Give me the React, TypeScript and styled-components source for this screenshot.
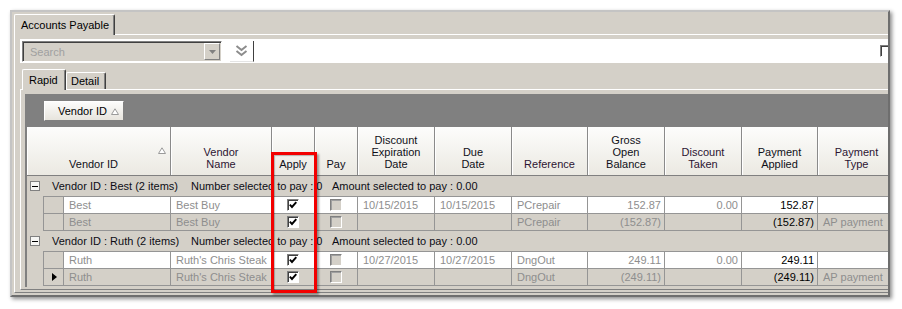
import React from 'react';
import styled, { createGlobalStyle } from 'styled-components';

const GlobalStyle = createGlobalStyle`
  html, body {
    margin: 0;
    padding: 0;
    background: #fff;
  }
  body {
    font-family: "Liberation Sans", Arial, sans-serif;
    font-size: 11px;
    color: #000;
  }
`;

const Page = styled.div`
  position: relative;
  width: 902px;
  height: 309px;
  padding: 10px 0 0 10px;
  box-sizing: border-box;
`;

const Window = styled.div`
  width: 880px;
  height: 287px;
  box-sizing: border-box;
  background: #d4d0c8;
  border: 2px solid;
  border-color: #c4c4c4 #6e6e6e #6e6e6e #c4c4c4;
  box-shadow: 2px 2px 4px rgba(0, 0, 0, 0.45);
  padding: 2px 0 2px 2px;
  display: flex;
  flex-direction: column;
  overflow: hidden;
`;

const TabStrip = styled.div<{ $indent?: number }>`
  display: flex;
  align-items: flex-end;
  height: 20px;
  padding-left: ${p => p.$indent ?? 0}px;
  flex-shrink: 0;
`;

const Tab = styled.div<{ $active?: boolean; $width: number }>`
  position: relative;
  z-index: 1;
  box-sizing: border-box;
  width: ${p => p.$width}px;
  height: ${p => (p.$active ? 21 : 17)}px;
  margin-bottom: ${p => (p.$active ? -1 : 0)}px;
  padding: ${p => (p.$active ? '0 0 1px 6px' : '0 0 0 4px')};
  background: #d4d0c8;
  border-top: 1px solid #fff;
  border-left: 1px solid #fff;
  border-right: 1px solid #404040;
  border-radius: 2px 2px 0 0;
  box-shadow: inset -1px 0 #808080;
  display: flex;
  align-items: center;
  white-space: nowrap;
`;

const Panel = styled.div<{ $pad: string }>`
  flex: 1;
  min-height: 0;
  display: flex;
  flex-direction: column;
  border-top: 1px solid #fff;
  border-left: 1px solid #fff;
  border-bottom: 1px solid #808080;
  padding: ${p => p.$pad};
`;

const SearchStrip = styled.div`
  height: 24px;
  flex-shrink: 0;
  background: #fff;
  display: flex;
  align-items: center;
  padding-left: 2px;
  margin-bottom: 6px;
  gap: 8px;
`;

const SearchBox = styled.div`
  box-sizing: border-box;
  width: 200px;
  height: 21px;
  background: #d4d0c8;
  border: 1px solid;
  border-color: #808080 #fff #fff #808080;
  box-shadow: inset 1px 1px #404040;
  display: flex;
  align-items: center;
  padding: 1px 1px 0 7px;
  color: #a0a0a0;
`;

const DropButton = styled.div`
  margin-left: auto;
  box-sizing: border-box;
  width: 16px;
  height: 17px;
  background: #d4d0c8;
  border: 1px solid;
  border-color: #fff #808080 #808080 #fff;
  display: flex;
  align-items: center;
  justify-content: center;
`;

const ChevronButton = styled.div`
  box-sizing: border-box;
  width: 24px;
  height: 21px;
  background: #fff;
  border-right: 1px solid #404040;
  border-bottom: 1px solid #e4e4e4;
  display: flex;
  align-items: center;
  justify-content: center;
`;

const CornerCheck = styled.div`
  margin-left: auto;
  margin-right: -4px;
  box-sizing: border-box;
  width: 12px;
  height: 12px;
  background: #fff;
  border: 1px solid;
  border-color: #808080 #fff #fff #808080;
  box-shadow: inset 1px 1px #404040;
`;

const Grid = styled.div`
  flex: 1;
  display: flex;
  flex-direction: column;
  background: #d4d0c8;
  border-left: 2px solid #808080;
`;

const GroupByArea = styled.div`
  height: 33px;
  flex-shrink: 0;
  box-sizing: border-box;
  background: #808080;
  padding: 7px 0 0 17px;
`;

const GroupByButton = styled.div`
  box-sizing: border-box;
  width: 80px;
  height: 20px;
  background: linear-gradient(#fcfcfb, #e7e4dd);
  border: 1px solid;
  border-color: #fff #808080 #808080 #fff;
  display: flex;
  align-items: center;
  gap: 4px;
  padding-left: 13px;
`;

const HeaderRow = styled.div`
  display: flex;
  height: 49px;
  box-sizing: border-box;
  border-bottom: 1px solid #808080;
  flex-shrink: 0;
`;

const HeaderCell = styled.div<{ $w: number; $purple?: boolean; $sortable?: boolean }>`
  position: relative;
  flex-shrink: 0;
  box-sizing: border-box;
  width: ${p => p.$w}px;
  background: linear-gradient(#fdfdfc, #ebe9e2);
  border-right: 1px solid #8a8a8a;
  box-shadow: inset 1px 0 #fff;
  display: flex;
  flex-direction: column;
  justify-content: flex-end;
  align-items: center;
  text-align: center;
  line-height: 12px;
  padding: 0 ${p => (p.$sortable ? 10 : 0)}px 5px 0;
  color: ${p => (p.$purple ? '#2c1432' : '#101018')};
`;

const SortMark = styled.div`
  position: absolute;
  top: 20px;
  right: 4px;
  line-height: 0;
`;

const GroupRow = styled.div`
  height: 20px;
  flex-shrink: 0;
  display: flex;
  align-items: center;
  padding-left: 3px;
  white-space: nowrap;
`;

const Expander = styled.div`
  box-sizing: border-box;
  width: 10px;
  height: 10px;
  margin-right: 12px;
  background: #f6f6f4;
  border: 1px solid #808080;
  display: flex;
  align-items: center;
  justify-content: center;
  &::after {
    content: '';
    width: 6px;
    height: 1px;
    background: #000;
  }
`;

const GroupLabel = styled.span<{ $w?: number }>`
  display: inline-block;
  width: ${p => (p.$w ? `${p.$w}px` : 'auto')};
  color: #0c0c14;
`;

const DataBlock = styled.div`
  margin-left: 16px;
  border-top: 1px solid #959595;
  border-left: 1px solid #959595;
  flex-shrink: 0;
`;

const DataRow = styled.div<{ $light: boolean }>`
  display: flex;
  height: 17px;
  box-sizing: border-box;
  border-bottom: 1px solid #959595;
  background: ${p => (p.$light ? '#fff' : '#d4d0c8')};
`;

const Selector = styled.div`
  flex-shrink: 0;
  box-sizing: border-box;
  width: 20px;
  background: #d4d0c8;
  border-right: 1px solid #959595;
  display: flex;
  align-items: center;
  justify-content: center;
`;

const Pointer = styled.div`
  width: 0;
  height: 0;
  margin-left: 2px;
  border-top: 4px solid transparent;
  border-bottom: 4px solid transparent;
  border-left: 5px solid #000;
`;

const Cell = styled.div<{ $w: number; $align?: 'left' | 'right' | 'center'; $strong?: boolean }>`
  flex-shrink: 0;
  box-sizing: border-box;
  width: ${p => p.$w}px;
  border-right: 1px solid #959595;
  display: flex;
  align-items: center;
  justify-content: ${p =>
    p.$align === 'right' ? 'flex-end' : p.$align === 'center' ? 'center' : 'flex-start'};
  padding: ${p => (p.$align === 'right' ? '0 3px 0 0' : p.$align === 'center' ? '0' : '0 0 0 5px')};
  white-space: nowrap;
  overflow: hidden;
  color: ${p => (p.$strong ? '#000' : '#8e8e8e')};
`;

const CheckBox = styled.div<{ $enabled?: boolean }>`
  box-sizing: border-box;
  width: 12px;
  height: 12px;
  background: ${p => (p.$enabled ? '#fff' : '#d4d0c8')};
  border: 1px solid;
  border-color: #808080 #fff #fff #808080;
  box-shadow: inset 1px 1px ${p => (p.$enabled ? '#404040' : '#a0a0a0')};
  display: flex;
  align-items: center;
  justify-content: center;
  line-height: 0;
`;

const Annotation = styled.div`
  position: absolute;
  left: 271px;
  top: 152px;
  width: 46px;
  height: 141px;
  box-sizing: border-box;
  border: 3px solid #f20000;
  box-shadow: 2px 2px 2px rgba(0, 0, 0, 0.35), inset 1px 1px 1px rgba(0, 0, 0, 0.25);
  pointer-events: none;
`;

interface Column {
  title: string[];
  w: number;
  purple?: boolean;
  sortable?: boolean;
}

const columns: Column[] = [
  { title: ['Vendor ID'], w: 144, sortable: true },
  { title: ['Vendor', 'Name'], w: 101, purple: true },
  { title: ['Apply'], w: 43 },
  { title: ['Pay'], w: 43 },
  { title: ['Discount', 'Expiration', 'Date'], w: 77 },
  { title: ['Due', 'Date'], w: 77 },
  { title: ['Reference'], w: 76, purple: true },
  { title: ['Gross', 'Open', 'Balance'], w: 77 },
  { title: ['Discount', 'Taken'], w: 77, purple: true },
  { title: ['Payment', 'Applied'], w: 76 },
  { title: ['Payment', 'Type'], w: 78, purple: true },
];

interface Payable {
  vendor: string;
  name: string;
  discDate: string;
  dueDate: string;
  reference: string;
  gross: string;
  taken: string;
  applied: string;
  type: string;
  light: boolean;
  current?: boolean;
}

interface Group {
  vendor: string;
  rows: Payable[];
}

const groups: Group[] = [
  {
    vendor: 'Best',
    rows: [
      { vendor: 'Best', name: 'Best Buy', discDate: '10/15/2015', dueDate: '10/15/2015', reference: 'PCrepair', gross: '152.87', taken: '0.00', applied: '152.87', type: '', light: true },
      { vendor: 'Best', name: 'Best Buy', discDate: '', dueDate: '', reference: 'PCrepair', gross: '(152.87)', taken: '', applied: '(152.87)', type: 'AP payment', light: false },
    ],
  },
  {
    vendor: 'Ruth',
    rows: [
      { vendor: 'Ruth', name: "Ruth's Chris Steak", discDate: '10/27/2015', dueDate: '10/27/2015', reference: 'DngOut', gross: '249.11', taken: '0.00', applied: '249.11', type: '', light: true },
      { vendor: 'Ruth', name: "Ruth's Chris Steak", discDate: '', dueDate: '', reference: 'DngOut', gross: '(249.11)', taken: '', applied: '(249.11)', type: 'AP payment', light: false, current: true },
    ],
  },
];

function SortTriangle() {
  return (
    <svg width="8" height="7" viewBox="0 0 8 7">
      <polygon points="0.5,6.5 4,0.8 7.5,6.5" fill="#fff" stroke="#9a9a9a" strokeWidth="1" />
    </svg>
  );
}

function Tick() {
  return (
    <svg width="8" height="8" viewBox="0 0 8 8">
      <polyline points="0.8,3.6 3,6 7.3,1.2" fill="none" stroke="#000" strokeWidth="1.9" />
    </svg>
  );
}

function PayableRow({ row }: { row: Payable }) {
  const w = columns.map(c => c.w);
  return (
    <DataRow $light={row.light}>
      <Selector>{row.current && <Pointer />}</Selector>
      <Cell $w={w[0] - 37}>{row.vendor}</Cell>
      <Cell $w={w[1]}>{row.name}</Cell>
      <Cell $w={w[2]} $align="center">
        <CheckBox $enabled><Tick /></CheckBox>
      </Cell>
      <Cell $w={w[3]} $align="center">
        <CheckBox />
      </Cell>
      <Cell $w={w[4]}>{row.discDate}</Cell>
      <Cell $w={w[5]}>{row.dueDate}</Cell>
      <Cell $w={w[6]}>{row.reference}</Cell>
      <Cell $w={w[7]} $align="right">{row.gross}</Cell>
      <Cell $w={w[8]} $align="right">{row.taken}</Cell>
      <Cell $w={w[9]} $align="right" $strong>{row.applied}</Cell>
      <Cell $w={w[10]}>{row.type}</Cell>
    </DataRow>
  );
}

export default function App() {
  return (
    <Page>
      <GlobalStyle />
      <Window>
        <TabStrip>
          <Tab $active $width={101}>Accounts Payable</Tab>
        </TabStrip>
        <Panel $pad="4px 0 2px 5px">
          <SearchStrip>
            <SearchBox>
              Search
              <DropButton>
                <svg width="7" height="4" viewBox="0 0 7 4">
                  <polygon points="0,0 7,0 3.5,4" fill="#808080" />
                </svg>
              </DropButton>
            </SearchBox>
            <ChevronButton>
              <svg width="13" height="12" viewBox="0 0 13 12">
                <polyline points="1.5,1 6.5,5 11.5,1" fill="none" stroke="#8c8c8c" strokeWidth="2" />
                <polyline points="1.5,6 6.5,10 11.5,6" fill="none" stroke="#8c8c8c" strokeWidth="2" />
              </svg>
            </ChevronButton>
            <CornerCheck />
          </SearchStrip>
          <TabStrip $indent={2}>
            <Tab $active $width={44}>Rapid</Tab>
            <Tab $width={40}>Detail</Tab>
          </TabStrip>
          <Panel $pad="4px 0 2px 4px">
            <Grid>
              <GroupByArea>
                <GroupByButton>
                  Vendor ID
                  <SortTriangle />
                </GroupByButton>
              </GroupByArea>
              <HeaderRow>
                {columns.map(col => (
                  <HeaderCell key={col.title.join(' ')} $w={col.w} $purple={col.purple} $sortable={col.sortable}>
                    {col.title.map(line => (
                      <div key={line}>{line}</div>
                    ))}
                    {col.sortable && (
                      <SortMark>
                        <SortTriangle />
                      </SortMark>
                    )}
                  </HeaderCell>
                ))}
              </HeaderRow>
              {groups.map(group => (
                <React.Fragment key={group.vendor}>
                  <GroupRow>
                    <Expander />
                    <GroupLabel $w={139}>Vendor ID : {group.vendor} ({group.rows.length} items)</GroupLabel>
                    <GroupLabel $w={141}>Number selected to pay : 0</GroupLabel>
                    <GroupLabel>Amount selected to pay : 0.00</GroupLabel>
                  </GroupRow>
                  <DataBlock>
                    {group.rows.map((row, i) => (
                      <PayableRow key={i} row={row} />
                    ))}
                  </DataBlock>
                </React.Fragment>
              ))}
            </Grid>
          </Panel>
        </Panel>
      </Window>
      <Annotation />
    </Page>
  );
}
